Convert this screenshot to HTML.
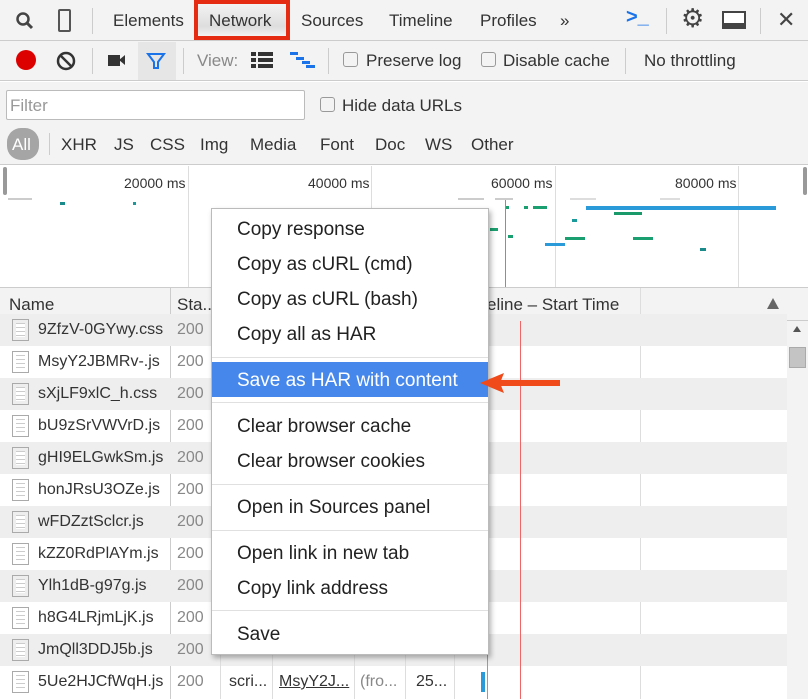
<!DOCTYPE html>
<html><head><meta charset="utf-8"><style>
*{box-sizing:border-box;margin:0;padding:0}
body{width:808px;height:699px;overflow:hidden;background:#fff;font-family:"Liberation Sans",sans-serif;color:#333;position:relative}
.a{position:absolute;white-space:nowrap}
.t{font-size:17px;color:#333}
.g{color:#888}
.cb{position:absolute;width:15px;height:15px;border:1px solid #999;border-radius:3px;background:#f3f3f3}
.row{position:absolute;left:0;width:787px;height:32px}
.nm{position:absolute;left:38px;top:7px;font-size:16px;color:#333}
.st{position:absolute;left:177px;top:7px;font-size:16px;color:#888}
.ic{position:absolute;left:12px;top:5px;width:17px;height:22px;border:1px solid #aaa;background:repeating-linear-gradient(#fff 0 3px,#ccc 3px 4px);background-clip:content-box;padding:3px}
.mi{position:absolute;left:237px;font-size:19px;color:#222}
.sep{position:absolute;left:212px;width:276px;height:1px;background:#e0e0e0}
</style></head><body>
<div class="a" style="left:0;top:0;width:808px;height:41px;background:#f3f3f3;border-bottom:1px solid #ccc"></div>
<svg class="a" style="left:15px;top:11px" width="20" height="20"><circle cx="8" cy="8" r="5.5" fill="none" stroke="#444" stroke-width="2.5"/><line x1="12" y1="12" x2="17" y2="17" stroke="#444" stroke-width="3"/></svg>
<div class="a" style="left:58px;top:9px;width:13px;height:23px;border:2px solid #555;border-radius:2px"></div>
<div class="a" style="left:92px;top:8px;width:1px;height:26px;background:#ccc"></div>
<div class="a t" style="left:113px;top:11px">Elements</div>
<div class="a" style="left:194px;top:0;width:96px;height:40px;background:linear-gradient(#f3f3f3,#ddd 70%,#f3f3f3);border:4px solid #e52b12"></div>
<div class="a t" style="left:209px;top:11px">Network</div>
<div class="a t" style="left:301px;top:11px">Sources</div>
<div class="a t" style="left:389px;top:11px">Timeline</div>
<div class="a t" style="left:480px;top:11px">Profiles</div>
<div class="a t" style="left:560px;top:11px">»</div>
<div class="a" style="left:626px;top:6px;font-size:20px;color:#1a73e8;font-weight:bold">&gt;_</div>
<div class="a" style="left:666px;top:8px;width:1px;height:26px;background:#ccc"></div>
<div class="a" style="left:681px;top:3px;font-size:26px;color:#444">⚙</div>
<div class="a" style="left:722px;top:11px;width:24px;height:18px;border:2px solid #444;border-bottom-width:6px;background:#fff"></div>
<div class="a" style="left:760px;top:8px;width:1px;height:26px;background:#ccc"></div>
<div class="a" style="left:777px;top:7px;font-size:22px;color:#444">✕</div>
<div class="a" style="left:0;top:41px;width:808px;height:40px;background:#f3f3f3;border-bottom:1px solid #ccc"></div>
<div class="a" style="left:16px;top:50px;width:20px;height:20px;border-radius:50%;background:#d00"></div>
<svg class="a" style="left:55px;top:50px" width="22" height="22"><circle cx="11" cy="11" r="8" fill="none" stroke="#333" stroke-width="2.5"/><line x1="5" y1="5" x2="17" y2="17" stroke="#333" stroke-width="2.5"/></svg>
<div class="a" style="left:92px;top:48px;width:1px;height:26px;background:#ccc"></div>
<div class="a" style="left:108px;top:55px;width:12px;height:11px;background:#333"></div>
<div class="a" style="left:119px;top:55px;border:5px solid transparent;border-right:6px solid #333;border-left:0"></div>
<div class="a" style="left:138px;top:42px;width:38px;height:38px;background:#e6e6e6"></div>
<svg class="a" style="left:146px;top:51px" width="20" height="20"><path d="M2 3 H18 L12 11 V17 H8 V11 Z" fill="none" stroke="#1a73e8" stroke-width="2"/></svg>
<div class="a" style="left:183px;top:48px;width:1px;height:26px;background:#ccc"></div>
<div class="a t g" style="left:197px;top:51px">View:</div>
<svg class="a" style="left:251px;top:52px" width="22" height="16"><g fill="#333"><rect x="0" y="0" width="5" height="4"/><rect x="7" y="0" width="15" height="4"/><rect x="0" y="6" width="5" height="4"/><rect x="7" y="6" width="15" height="4"/><rect x="0" y="12" width="5" height="4"/><rect x="7" y="12" width="15" height="4"/></g></svg>
<svg class="a" style="left:290px;top:52px" width="26" height="17"><g fill="#1a73e8"><rect x="0" y="0" width="8" height="3"/><rect x="6" y="5" width="8" height="3"/><rect x="12" y="9" width="8" height="3"/><rect x="16" y="13" width="9" height="3"/></g></svg>
<div class="a" style="left:328px;top:48px;width:1px;height:26px;background:#ccc"></div>
<div class="cb" style="left:343px;top:52px"></div>
<div class="a t" style="left:366px;top:51px">Preserve log</div>
<div class="cb" style="left:481px;top:52px"></div>
<div class="a t" style="left:503px;top:51px">Disable cache</div>
<div class="a" style="left:625px;top:48px;width:1px;height:26px;background:#ccc"></div>
<div class="a t" style="left:644px;top:51px">No throttling</div>
<div class="a" style="left:0;top:82px;width:808px;height:83px;background:#f3f3f3;border-bottom:1px solid #ccc"></div>
<div class="a" style="left:6px;top:90px;width:299px;height:30px;border:1px solid #bbb;background:#fff;border-radius:2px"></div>
<div class="a t" style="left:10px;top:96px;color:#999">Filter</div>
<div class="cb" style="left:320px;top:97px"></div>
<div class="a t" style="left:342px;top:96px">Hide data URLs</div>
<div class="a" style="left:7px;top:128px;width:32px;height:32px;border-radius:14px;background:#a5a5a5"></div>
<div class="a t" style="left:12px;top:135px;color:#fff">All</div>
<div class="a" style="left:49px;top:133px;width:1px;height:22px;background:#ccc"></div>
<div class="a t" style="left:61px;top:135px">XHR</div>
<div class="a t" style="left:114px;top:135px">JS</div>
<div class="a t" style="left:150px;top:135px">CSS</div>
<div class="a t" style="left:200px;top:135px">Img</div>
<div class="a t" style="left:250px;top:135px">Media</div>
<div class="a t" style="left:320px;top:135px">Font</div>
<div class="a t" style="left:375px;top:135px">Doc</div>
<div class="a t" style="left:425px;top:135px">WS</div>
<div class="a t" style="left:471px;top:135px">Other</div>
<div class="a" style="left:3px;top:167px;width:4px;height:28px;background:#999;border-radius:2px"></div>
<div class="a" style="left:803px;top:167px;width:4px;height:28px;background:#999;border-radius:2px"></div>
<div class="a" style="left:188px;top:166px;width:1px;height:122px;background:#ddd"></div>
<div class="a" style="left:371px;top:166px;width:1px;height:122px;background:#ddd"></div>
<div class="a" style="left:555px;top:166px;width:1px;height:122px;background:#ddd"></div>
<div class="a" style="left:738px;top:166px;width:1px;height:122px;background:#ddd"></div>
<div class="a" style="left:124px;top:175px;font-size:14px">20000 ms</div>
<div class="a" style="left:308px;top:175px;font-size:14px">40000 ms</div>
<div class="a" style="left:491px;top:175px;font-size:14px">60000 ms</div>
<div class="a" style="left:675px;top:175px;font-size:14px">80000 ms</div>
<div class="a" style="left:8px;top:198px;width:24px;height:2px;background:#ccc"></div>
<div class="a" style="left:458px;top:198px;width:26px;height:2px;background:#ccc"></div>
<div class="a" style="left:495px;top:198px;width:18px;height:2px;background:#ccc"></div>
<div class="a" style="left:570px;top:198px;width:26px;height:2px;background:#ddd"></div>
<div class="a" style="left:660px;top:198px;width:20px;height:2px;background:#ddd"></div>
<div class="a" style="left:60px;top:202px;width:5px;height:3px;background:#1a8a8a"></div>
<div class="a" style="left:133px;top:202px;width:3px;height:3px;background:#1a9a9a"></div>
<div class="a" style="left:586px;top:206px;width:190px;height:4px;background:#2a9ad8"></div>
<div class="a" style="left:614px;top:212px;width:28px;height:3px;background:#1a9a6a"></div>
<div class="a" style="left:505px;top:206px;width:4px;height:3px;background:#1aa070"></div>
<div class="a" style="left:524px;top:206px;width:4px;height:3px;background:#1aa070"></div>
<div class="a" style="left:533px;top:206px;width:14px;height:3px;background:#1aa070"></div>
<div class="a" style="left:490px;top:228px;width:8px;height:3px;background:#1aa070"></div>
<div class="a" style="left:508px;top:235px;width:5px;height:3px;background:#1aa070"></div>
<div class="a" style="left:572px;top:219px;width:5px;height:3px;background:#1a9a9a"></div>
<div class="a" style="left:565px;top:237px;width:20px;height:3px;background:#1aa070"></div>
<div class="a" style="left:633px;top:237px;width:20px;height:3px;background:#1aa070"></div>
<div class="a" style="left:545px;top:243px;width:20px;height:3px;background:#2a9ad8"></div>
<div class="a" style="left:700px;top:248px;width:6px;height:3px;background:#1a8a8a"></div>
<div class="a" style="left:505px;top:200px;width:1px;height:88px;background:#e66"></div>
<div class="a" style="left:0;top:287px;width:808px;height:1px;background:#ccc"></div>
<div class="a" style="left:0;top:288px;width:808px;height:33px;background:#f3f3f3;border-bottom:1px solid #ccc"></div>
<div class="a" style="left:170px;top:288px;width:1px;height:411px;background:#ccc"></div>
<div class="a" style="left:640px;top:288px;width:1px;height:411px;background:#ddd"></div>
<div class="a t" style="left:9px;top:295px">Name</div>
<div class="a t" style="left:177px;top:295px">Sta...</div>
<div class="a t" style="left:487px;top:295px">eline – Start Time</div>
<div class="a" style="left:767px;top:298px;border:6px solid transparent;border-bottom:11px solid #666;border-top:0"></div>
<div class="a" style="left:787px;top:321px;width:21px;height:378px;background:#f3f3f3"></div>
<div class="a" style="left:789px;top:347px;width:17px;height:21px;background:#c4c4c4;border:1px solid #aaa"></div>
<div class="a" style="left:793px;top:326px;border:4px solid transparent;border-bottom:6px solid #555;border-top:0"></div>
<div class="row" style="top:314px;background:#eee"><div class="ic"></div><div class="nm">9ZfzV-0GYwy.css</div><div class="st">200</div></div>
<div class="row" style="top:346px"><div class="ic"></div><div class="nm">MsyY2JBMRv-.js</div><div class="st">200</div></div>
<div class="row" style="top:378px;background:#eee"><div class="ic"></div><div class="nm">sXjLF9xlC_h.css</div><div class="st">200</div></div>
<div class="row" style="top:410px"><div class="ic"></div><div class="nm">bU9zSrVWVrD.js</div><div class="st">200</div></div>
<div class="row" style="top:442px;background:#eee"><div class="ic"></div><div class="nm">gHI9ELGwkSm.js</div><div class="st">200</div></div>
<div class="row" style="top:474px"><div class="ic"></div><div class="nm">honJRsU3OZe.js</div><div class="st">200</div></div>
<div class="row" style="top:506px;background:#eee"><div class="ic"></div><div class="nm">wFDZztSclcr.js</div><div class="st">200</div></div>
<div class="row" style="top:538px"><div class="ic"></div><div class="nm">kZZ0RdPlAYm.js</div><div class="st">200</div></div>
<div class="row" style="top:570px;background:#eee"><div class="ic"></div><div class="nm">Ylh1dB-g97g.js</div><div class="st">200</div></div>
<div class="row" style="top:602px"><div class="ic"></div><div class="nm">h8G4LRjmLjK.js</div><div class="st">200</div></div>
<div class="row" style="top:634px;background:#eee"><div class="ic"></div><div class="nm">JmQll3DDJ5b.js</div><div class="st">200</div></div>
<div class="row" style="top:666px"><div class="ic"></div><div class="nm">5Ue2HJCfWqH.js</div><div class="st">200</div>
<div class="a" style="left:229px;top:7px;font-size:16px">scri...</div><div class="a" style="left:279px;top:7px;font-size:16px;text-decoration:underline">MsyY2J...</div><div class="a g" style="left:360px;top:7px;font-size:16px">(fro...</div><div class="a" style="left:416px;top:7px;font-size:16px">25...</div>
<div class="a" style="left:481px;top:6px;width:4px;height:20px;background:#2a9ad8"></div></div>
<div class="a" style="left:220px;top:640px;width:1px;height:59px;background:#ddd"></div>
<div class="a" style="left:272px;top:640px;width:1px;height:59px;background:#ddd"></div>
<div class="a" style="left:354px;top:640px;width:1px;height:59px;background:#ddd"></div>
<div class="a" style="left:405px;top:640px;width:1px;height:59px;background:#ddd"></div>
<div class="a" style="left:454px;top:640px;width:1px;height:59px;background:#ddd"></div>
<div class="a" style="left:487px;top:321px;width:1px;height:378px;background:#99a"></div>
<div class="a" style="left:520px;top:321px;width:1px;height:378px;background:#e66"></div>
<div class="a" style="left:211px;top:208px;width:278px;height:447px;background:#fff;border:1px solid #bbb;box-shadow:2px 3px 5px rgba(0,0,0,.3)"></div>
<div class="mi" style="top:219px">Copy response</div>
<div class="mi" style="top:254px">Copy as cURL (cmd)</div>
<div class="mi" style="top:289px">Copy as cURL (bash)</div>
<div class="mi" style="top:324px">Copy all as HAR</div>
<div class="sep" style="top:357px"></div>
<div class="a" style="left:212px;top:362px;width:276px;height:35px;background:#4687ec"></div>
<div class="mi" style="top:370px;color:#fff">Save as HAR with content</div>
<div class="sep" style="top:402px"></div>
<div class="mi" style="top:416px">Clear browser cache</div>
<div class="mi" style="top:451px">Clear browser cookies</div>
<div class="sep" style="top:484px"></div>
<div class="mi" style="top:497px">Open in Sources panel</div>
<div class="sep" style="top:530px"></div>
<div class="mi" style="top:543px">Open link in new tab</div>
<div class="mi" style="top:578px">Copy link address</div>
<div class="sep" style="top:610px"></div>
<div class="mi" style="top:624px">Save</div>
<svg class="a" style="left:478px;top:370px" width="84" height="26"><rect x="20" y="10" width="62" height="6" fill="#f04a1a"/><path d="M2 13 L26 3 L22 13 L26 23 Z" fill="#f04a1a"/></svg>
</body></html>
